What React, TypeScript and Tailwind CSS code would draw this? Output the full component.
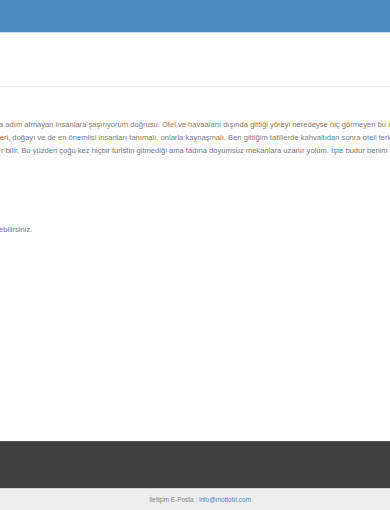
import React from "react";

export default function App() {
  const font = { fontFamily: '"Liberation Sans", Arial, sans-serif' };
  return (
    <div className="w-[390px] h-[510px] overflow-hidden bg-white flex flex-col" style={font}>
      <div className="h-[32px] bg-[#4a8bc2] shrink-0" />
      <div className="h-[1px] bg-[#c9ddef] shrink-0" />
      <div className="h-[53px] shrink-0 bg-white" />
      <div className="h-[1px] bg-[#e6e6e6] shrink-0" />
      <div className="flex-1 flex flex-col overflow-hidden">
        <div className="pt-[31px] text-[7.6px] leading-[13px] whitespace-nowrap">
          <div className="-ml-[1px] text-[#8a7c6e]">
            a adım atmayan insanlara şaşırıyorum doğrusu. Otel ve havaalanı dışında gittiği yöreyi neredeyse hiç görmeyen bu insanlar tatil yaptıklarını düşünürler.
          </div>
          <div className="-ml-[2px] text-[#7a7f86]">
            leri, doğayı ve de en önemlisi insanları tanımalı, onlarla kaynaşmalı. Ben gittiğim tatillerde kahvaltıdan sonra oteli terk ederim ve akşama kadar dönmem.
          </div>
          <div className="ml-[1px] text-[#737d88]">
            r bilir. Bu yüzden çoğu kez hiçbir turistin gitmediği ama tadına doyumsuz mekanlara uzanır yolum. İşte budur benim tatil anlayışım.
          </div>
        </div>
        <div className="pt-[66px] text-[7.6px] leading-[13px] text-[#7a7a7a] whitespace-nowrap -ml-[1px]">
          ebilirsiniz.
        </div>
        <div className="flex-1" />
        <div className="shrink-0 h-[1px] bg-[#5a5a5a]" />
        <div className="shrink-0 h-[46px] bg-[#404040]" />
        <div className="shrink-0 h-[1px] bg-[#cfcfcf]" />
        <div className="shrink-0 h-[21px] bg-[#eeeeee] flex items-center justify-center text-[6.4px] pt-[1px] pl-[10px]">
          <span className="text-[#808080] whitespace-pre">İletişim E-Posta : </span>
          <span className="text-[#4a86c5]">info@mottobt.com</span>
        </div>
      </div>
    </div>
  );
}
